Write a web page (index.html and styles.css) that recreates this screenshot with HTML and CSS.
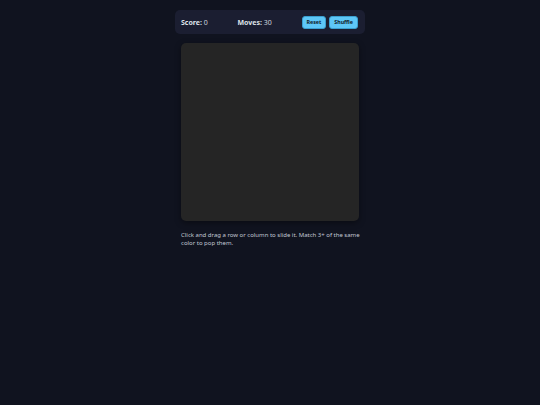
FILE: index.html
```html
<!DOCTYPE html>
<html>
<head>
<meta charset="utf-8">
<link rel="stylesheet" href="styles.css">
</head>
<body>
<div class="app">
  <div class="header">
    <div class="stat"><b>Score:</b> 0</div>
    <div class="stat"><b>Moves:</b> 30</div>
    <div class="buttons">
      <button class="btn">Reset</button>
      <button class="btn">Shuffle</button>
    </div>
  </div>
  <div class="board"></div>
  <p class="hint">Click and drag a row or column to slide it. Match 3+ of the same color to pop them.</p>
</div>
</body>
</html>
```
FILE: styles.css
```css
html, body {
  margin: 0;
  padding: 0;
  background: #10131f;
  font-family: "Noto Sans", "Open Sans", sans-serif;
  color: #d6dae3;
}
.app {
  width: 190px;
  margin: 10px auto 0;
  display: flex;
  flex-direction: column;
}
.header {
  height: 24px;
  box-sizing: border-box;
  background: #1b1e31;
  border-radius: 5px;
  padding: 0 7px 0 6px;
  display: flex;
  align-items: center;
  justify-content: space-between;
  font-size: 7px;
}
.stat {
  color: #cfd4de;
}
.stat b {
  font-weight: 700;
  color: #dfe3ea;
}
.buttons {
  display: flex;
  gap: 3px;
}
.btn {
  height: 13px;
  padding: 0 4px;
  border: 1px solid #3a9fd0;
  border-radius: 3px;
  background: #5ec7f7;
  color: #0e1a2a;
  font-family: inherit;
  font-size: 5.3px;
  font-weight: 700;
  line-height: 11px;
}
.board {
  margin: 9px 6px 0;
  height: 178px;
  background: #252525;
  border-radius: 5px;
  box-shadow: 0 2px 6px rgba(0,0,0,0.4);
}
.hint {
  margin: 10px 2px 0 6px;
  font-size: 6px;
  line-height: 8px;
  color: #c2c8d3;
}
```
